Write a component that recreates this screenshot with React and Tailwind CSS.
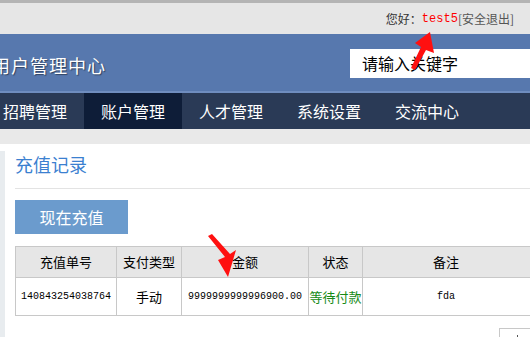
import React from 'react';

const NAV_ITEMS = ['招聘管理', '账户管理', '人才管理', '系统设置', '交流中心'];

const cjk = { fontFamily: '"Noto Sans CJK SC", "Liberation Sans", sans-serif' };
const mono = { fontFamily: '"Liberation Mono", "Noto Sans CJK SC", monospace' };

/**
 * 充值记录页面
 * - 顶部用户栏 / 标题栏 / 导航 / 充值记录表格
 */
function App() {
    return (
        <div className="relative w-[530px] h-[337px] overflow-hidden bg-white" style={cjk}>
            {/* 顶部用户栏 */}
            <div className="h-[3px] bg-[#b4b4b4]" />
            <div className="h-[31px] bg-[#e6e6e6] flex items-center justify-end pr-[16px] text-[12px] text-[#333]">
                <span>您好：</span>
                <span className="text-[#ff0000]" style={mono}>test5</span>
                <span className="text-[#555]">[安全退出]</span>
            </div>

            {/* 标题栏 */}
            <div className="h-[57px] bg-[#5778ae] flex items-center justify-between">
                <h1
                    className="-ml-[8px] mt-[6px] text-white text-[18px] tracking-[1px] whitespace-nowrap [text-shadow:1px_1px_1px_rgba(0,0,0,0.45)]"
                >
                    用户管理中心
                </h1>
                <div className="w-[180px] h-[29px] bg-white flex items-center pl-[12px] text-[16px] text-black mt-[1px]">
                    请输入关键字
                </div>
            </div>
            <div className="h-[2px] bg-[#6f8dbf]" />

            {/* 导航 */}
            <nav className="h-[36px] bg-[#2a3a56] flex text-white text-[16px]">
                {NAV_ITEMS.map((item, i) => (
                    <div
                        key={item}
                        className={`h-full flex items-center justify-center ${
                            i === 0 ? 'w-[84px] justify-start pl-[3px]' : 'w-[98px]'
                        } ${i === 1 ? 'bg-[#0e1d38]' : ''}`}
                    >
                        {item}
                    </div>
                ))}
            </nav>

            {/* 主体 */}
            <div className="h-[15px] bg-[#e9e9e9]" />
            <div className="flex h-full">
                <div className="w-[5px] shrink-0 bg-[#e8ecef] mt-[7px]" />
                <div className="flex-1 min-w-0 pl-[10px]">
                    <div className="pt-[8px] pb-[12px] border-b border-[#e3e3e3]">
                        <h2 className="text-[18px] text-[#3b80d0] leading-[24px]">充值记录</h2>
                    </div>
                    <button className="mt-[11px] w-[113px] h-[34px] bg-[#6b9bcd] text-white text-[16px]">
                        现在充值
                    </button>

                    <table className="mt-[12px] w-[540px] table-fixed border-collapse text-[13px] text-black">
                        <thead>
                            <tr className="bg-[#e6e6e6] h-[31px]">
                                <th className="w-[101px] border border-[#c8c8c8] font-normal">充值单号</th>
                                <th className="w-[65px] border border-[#c8c8c8] font-normal">支付类型</th>
                                <th className="w-[127px] border border-[#c8c8c8] font-normal">金额</th>
                                <th className="w-[54px] border border-[#c8c8c8] font-normal">状态</th>
                                <th className="border border-[#c8c8c8] font-normal pr-[25px]">备注</th>
                            </tr>
                        </thead>
                        <tbody>
                            <tr className="h-[38px] text-center">
                                <td className="border border-[#c8c8c8] text-[10px]" style={mono}>140843254038764</td>
                                <td className="border border-[#c8c8c8]">手动</td>
                                <td className="border border-[#c8c8c8] text-[10px]" style={mono}>9999999999996900.00</td>
                                <td className="border border-[#c8c8c8] text-[#168a16] whitespace-nowrap">等待付款</td>
                                <td className="border border-[#c8c8c8] text-[10px] pr-[25px]" style={mono}>fda</td>
                            </tr>
                        </tbody>
                    </table>

                    <div className="ml-[484px] mt-[12px] w-[40px] h-[20px] border-l border-t border-[#c8c8c8] flex justify-center pt-[6px]">
                        <div className="w-[5px] h-[5px] border-l border-b border-[#555]" />
                    </div>
                </div>
            </div>

            {/* 标注箭头 */}
            <svg className="absolute inset-0 pointer-events-none" width="530" height="337">
                <g fill="#ff1010">
                    <polygon points="430,32 434,53 426,50 415,70 411,68 421,47 415,43" />
                    <polygon points="228,277 218,260 225,257 208,236 212,234 230,254 236,250" />
                </g>
            </svg>
        </div>
    );
}

export default App;
